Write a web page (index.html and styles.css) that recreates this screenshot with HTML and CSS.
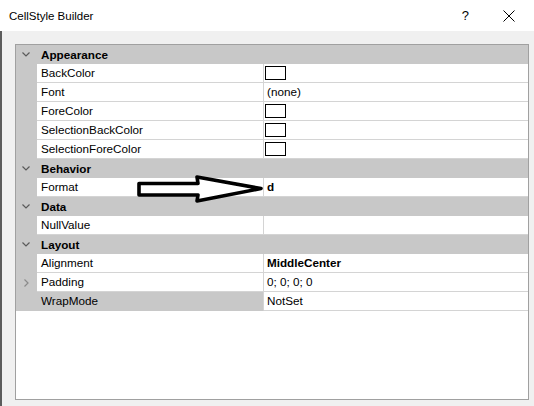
FILE: index.html
```html
<!DOCTYPE html>
<html>
<head>
<meta charset="utf-8">
<title>CellStyle Builder</title>
<link rel="stylesheet" href="styles.css">
</head>
<body>
<div class="window">
  <div class="titlebar">
    <span class="title">CellStyle Builder</span>
    <span class="help">?</span>
    <svg class="close" width="12" height="12" viewBox="0 0 12 12"><path d="M0.5 0.5 L11.5 11.5 M11.5 0.5 L0.5 11.5" stroke="#000" stroke-width="1" fill="none"/></svg>
  </div>
  <div class="client">
    <div class="grid">
      <div class="cat"><span class="chev"><svg width="8" height="5" viewBox="0 0 8 5"><polyline points="0.5,0.5 4,4 7.5,0.5" fill="none" stroke="#5a5a5a" stroke-width="1.2"/></svg></span><span>Appearance</span></div>
      <div class="row"><span class="gutter"></span><span class="label">BackColor</span><span class="value"><span class="swatch"></span></span></div>
      <div class="row"><span class="gutter"></span><span class="label">Font</span><span class="value">(none)</span></div>
      <div class="row"><span class="gutter"></span><span class="label">ForeColor</span><span class="value"><span class="swatch"></span></span></div>
      <div class="row"><span class="gutter"></span><span class="label">SelectionBackColor</span><span class="value"><span class="swatch"></span></span></div>
      <div class="row"><span class="gutter"></span><span class="label">SelectionForeColor</span><span class="value"><span class="swatch"></span></span></div>

      <div class="cat"><span class="chev"><svg width="8" height="5" viewBox="0 0 8 5"><polyline points="0.5,0.5 4,4 7.5,0.5" fill="none" stroke="#5a5a5a" stroke-width="1.2"/></svg></span><span>Behavior</span></div>
      <div class="row"><span class="gutter"></span><span class="label">Format</span><span class="value bold">d</span></div>

      <div class="cat"><span class="chev"><svg width="8" height="5" viewBox="0 0 8 5"><polyline points="0.5,0.5 4,4 7.5,0.5" fill="none" stroke="#5a5a5a" stroke-width="1.2"/></svg></span><span>Data</span></div>
      <div class="row"><span class="gutter"></span><span class="label">NullValue</span><span class="value"></span></div>

      <div class="cat"><span class="chev"><svg width="8" height="5" viewBox="0 0 8 5"><polyline points="0.5,0.5 4,4 7.5,0.5" fill="none" stroke="#5a5a5a" stroke-width="1.2"/></svg></span><span>Layout</span></div>
      <div class="row"><span class="gutter"></span><span class="label">Alignment</span><span class="value bold">MiddleCenter</span></div>
      <div class="row"><span class="gutter expand"><svg width="5" height="8" viewBox="0 0 5 8"><polyline points="0.5,0.5 4,4 0.5,7.5" fill="none" stroke="#8a8a8a" stroke-width="1.2"/></svg></span><span class="label">Padding</span><span class="value">0; 0; 0; 0</span></div>
      <div class="row selected"><span class="gutter"></span><span class="label">WrapMode</span><span class="value">NotSet</span></div>

      <svg class="arrow" width="132" height="30" viewBox="0 0 132 30">
        <path d="M4 9.5 L63 9.5 L62 3 L126 14.5 L62 27 L63 21 L4 21 Z" fill="#fff" stroke="#000" stroke-width="3.6" stroke-linejoin="round"/>
      </svg>
    </div>
  </div>
</div>
</body>
</html>
```

FILE: styles.css
```css
* { box-sizing: border-box; }

body {
  margin: 0;
  background: #f0f0f0;
  font-family: "Liberation Sans", Arial, sans-serif;
  font-size: 11.7px;
  color: #000;
}

.window {
  width: 534px;
  height: 406px;
  display: flex;
  flex-direction: column;
}

.titlebar {
  height: 31px;
  flex: none;
  background: #fff;
  display: flex;
  align-items: center;
  padding-left: 9px;
  padding-right: 19px;
}

.title {
  flex: 1;
  font-size: 11.5px;
}

.help {
  font-size: 13px;
  margin-right: 34px;
}

.close {
  display: block;
}

.client {
  flex: 1;
  border-left: 2px solid #5c5c5c;
  padding: 13px 0 0 13px;
}

.grid {
  position: relative;
  width: 514px;
  height: 356px;
  border: 1px solid #a0a0a0;
  background: #fff;
}

.cat {
  height: 19px;
  background: #c8c8c8;
  display: flex;
  align-items: center;
  font-weight: bold;
}

.chev {
  width: 25px;
  padding-left: 6px;
  display: flex;
  align-items: center;
}

.row {
  display: grid;
  grid-template-columns: 21px 227px 1fr;
  height: 19px;
}

.gutter {
  background: #c8c8c8;
  display: flex;
  align-items: center;
}

.gutter.expand {
  padding-left: 8px;
}

.label {
  padding-left: 4px;
  line-height: 18px;
  border-right: 1px solid #d4d4d4;
  border-bottom: 1px solid #d4d4d4;
  white-space: nowrap;
}

.selected .label {
  background: #c8c8c8;
  border-bottom-color: #c8c8c8;
}

.value {
  padding-left: 3px;
  line-height: 18px;
  border-bottom: 1px solid #d4d4d4;
  white-space: nowrap;
}

.bold {
  font-weight: bold;
}

.swatch {
  display: block;
  width: 21px;
  height: 14px;
  margin-top: 2px;
  margin-left: -2px;
  border: 1px solid #000;
  background: #fff;
}

.arrow {
  position: absolute;
  left: 119px;
  top: 129px;
}
```
